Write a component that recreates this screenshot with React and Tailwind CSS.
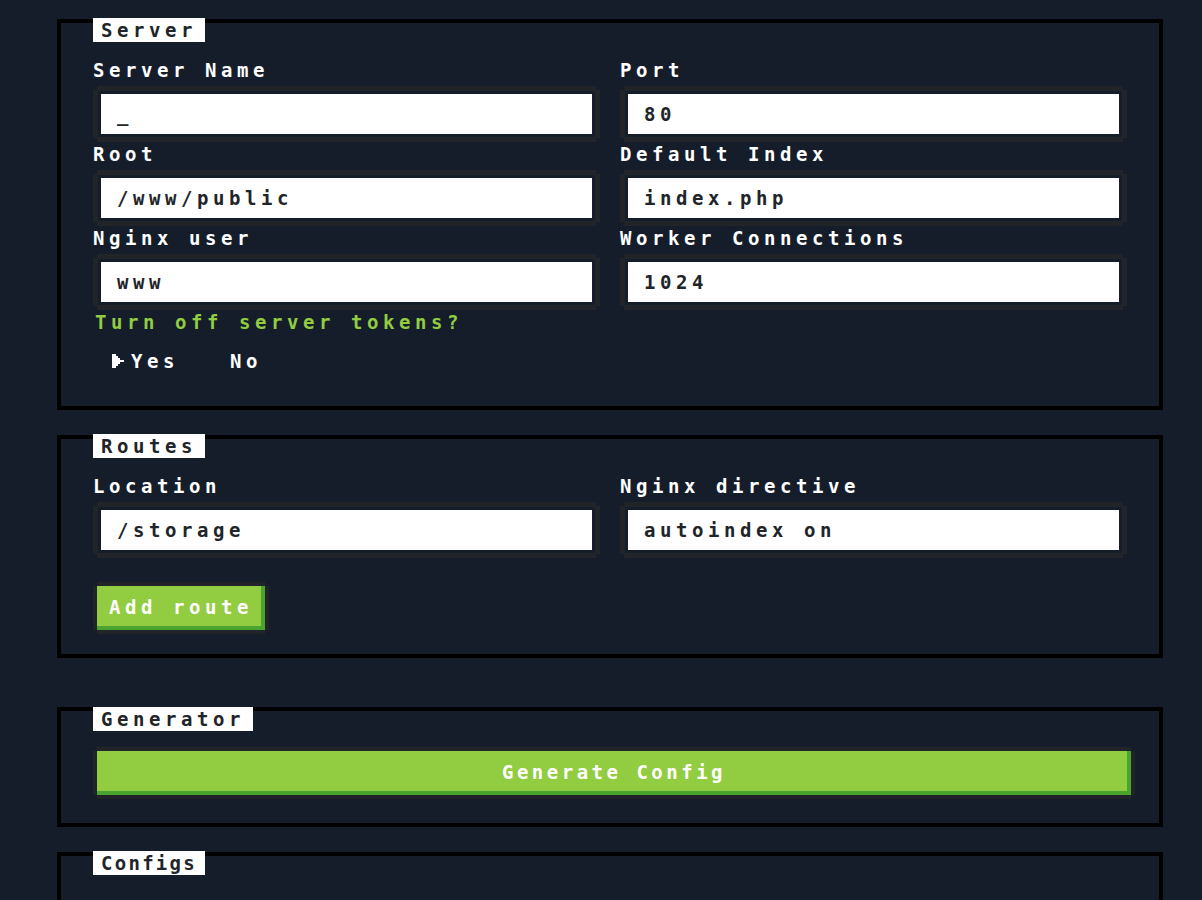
import React from "react";

const FONT = "font-['DejaVu_Sans_Mono',monospace] font-bold text-[19px] tracking-[4.56px]";
const FRAME =
  "shadow-[0_-4px_0_0_#212529,0_4px_0_0_#212529,-4px_0_0_0_#212529,4px_0_0_0_#212529]";
const BTN =
  "shadow-[inset_-4px_-4px_0_0_#4aa52e,0_-4px_0_0_#212529,0_4px_0_0_#212529,-4px_0_0_0_#212529,4px_0_0_0_#212529]";

function Title({ children, tight, className = "" }) {
  return (
    <div
      className={`w-fit h-[24px] bg-white px-2 pt-[2px] leading-[20px] text-[#212529] whitespace-pre ${
        tight ? "mt-[-4px]" : "mt-[-5px]"
      } mb-4 ${className}`}
    >
      {children}
    </div>
  );
}

function Label({ children, className = "" }) {
  return (
    <div className={`h-[28px] pt-[2px] leading-[20px] whitespace-pre ${className}`}>
      {children}
    </div>
  );
}

function Field({ label, value }) {
  return (
    <div className="flex flex-col">
      <Label className="text-white">{label}</Label>
      <div className="h-[56px] p-1">
        <div
          className={`h-[48px] border-4 border-transparent bg-white bg-clip-padding ${FRAME} flex items-center pl-4 text-[#212529] leading-[20px] whitespace-pre`}
        >
          {value}
        </div>
      </div>
    </div>
  );
}

function Arrow() {
  return (
    <svg width="12" height="14" viewBox="0 0 12 14" className="block" shapeRendering="crispEdges">
      <path d="M0 0H4V2H6V4H8V6H12V8H8V10H6V12H4V14H0Z" fill="#ffffff" />
    </svg>
  );
}

export default function App() {
  return (
    <div className={`min-h-[900px] bg-[#151d2b] ${FONT} pt-[19px] pb-10 overflow-hidden`}>
      <div className="ml-[57px] w-[1106px]">
        {/* Server */}
        <section className="border-4 border-black px-8 pb-[28px]">
          <Title>Server</Title>
          <div className="grid grid-cols-2 gap-x-5">
            <Field label="Server Name" value="_" />
            <Field label="Port" value="80" />
            <Field label="Root" value="/www/public" />
            <Field label="Default Index" value="index.php" />
            <Field label="Nginx user" value="www" />
            <Field label="Worker Connections" value="1024" />
          </div>
          <Label className="text-[#92cc41] ml-[2px]">Turn off server tokens?</Label>
          <div className="mt-3 h-[28px] flex items-start pt-[4px] pl-[19px] text-white leading-[20px]">
            <div className="flex items-start">
              <Arrow />
              <span className="ml-[7px] mt-[-3px]">Yes</span>
            </div>
            <span className="ml-[51px] mt-[-3px]">No</span>
          </div>
        </section>

        {/* Routes */}
        <section className="mt-[25px] border-4 border-black px-8 pb-5">
          <Title>Routes</Title>
          <div className="grid grid-cols-2 gap-x-5">
            <Field label="Location" value="/storage" />
            <Field label="Nginx directive" value="autoindex on" />
          </div>
          <div className="mt-6 p-1 w-fit">
            <div
              className={`h-[44px] px-3 pb-[2px] flex items-center bg-[#92cc41] ${BTN} text-white leading-[20px] whitespace-pre`}
            >
              Add route
            </div>
          </div>
        </section>

        {/* Generator */}
        <section className="mt-[49px] border-4 border-black px-8 pb-6">
          <Title tight>Generator</Title>
          <div className="py-1">
            <div
              className={`ml-1 w-full h-[44px] pb-[2px] flex items-center justify-center bg-[#92cc41] ${BTN} text-white leading-[20px] whitespace-pre tracking-[3.5px]`}
            >
              Generate Config
            </div>
          </div>
        </section>

        {/* Configs */}
        <section className="mt-[25px] border-4 border-black px-8 h-[200px]">
          <Title className="w-[112px] tracking-[2.27px]">Configs</Title>
        </section>
      </div>
    </div>
  );
}
